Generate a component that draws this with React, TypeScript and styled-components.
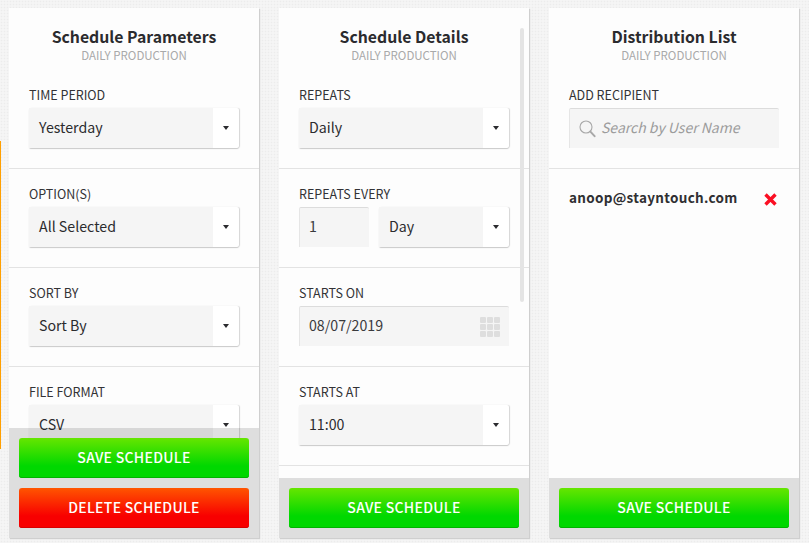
import React from "react";
import styled, { createGlobalStyle } from "styled-components";

const GlobalStyle = createGlobalStyle`
    html, body {
        margin: 0;
        padding: 0;
        height: 100%;
        overflow: hidden;
    }
    body {
        background-color: #f3f3f3;
        background-image:
            radial-gradient(#ececec 1px, transparent 1px),
            radial-gradient(#f9f9f9 1px, transparent 1px);
        background-size: 3px 3px;
        background-position: 0 0, 1.5px 1.5px;
        font-family: "Noto Sans CJK SC", "Open Sans", sans-serif;
        color: #2b2b2e;
    }
`;

const Page = styled.main`
    position: relative;
    display: flex;
    gap: 20px;
    height: 543px;
    padding: 8px 0 5px 9px;
    box-sizing: border-box;
`;

// Orange edge of the panel hidden behind the columns
const EdgeBar = styled.div`
    position: absolute;
    left: 0;
    top: 141px;
    width: 1px;
    height: 308px;
    background: #ff9f00;
`;

const Card = styled.section`
    position: relative;
    display: flex;
    flex-direction: column;
    width: 250px;
    background: #fdfdfd;
    box-shadow: 1px 1px 1px #cfcfcf;
    overflow: hidden;
`;

const ScrollArea = styled.div`
    flex: 1;
    min-height: 0;
    overflow: hidden;
`;

const ScrollThumb = styled.div`
    position: absolute;
    top: 20px;
    right: 5px;
    width: 4px;
    height: 274px;
    border-radius: 2px;
    background: #e4e4e4;
`;

const Header = styled.header`
    height: 78px;
    padding-top: 18px;
    box-sizing: border-box;
    text-align: center;
`;

const Title = styled.h2`
    margin: 0;
    font-size: 15.8px;
    line-height: 21px;
    font-weight: 600;
    color: #2b2b2e;
`;

const Subtitle = styled.div`
    font-size: 11.5px;
    line-height: 17px;
    color: #a9a9a9;
`;

const Section = styled.div<{ $first?: boolean; $last?: boolean }>`
    padding: ${({ $first }) => ($first ? "0 20px 20px" : "16px 20px 20px")};
    border-bottom: 1px solid ${({ $last }) => ($last ? "transparent" : "#e3e3e3")};
`;

const Label = styled.div`
    height: 18px;
    margin-bottom: 4px;
    font-size: 12.5px;
    line-height: 18px;
    color: #333336;
`;

const Row = styled.div`
    display: flex;
    gap: 10px;
`;

const SelectBox = styled.div`
    display: flex;
    flex: 1;
    height: 40px;
    border-radius: 2px;
    background: #fff;
    box-shadow: 0 1px 1px #c9c9c9, 1px 0 1px #d8d8d8;
`;

const SelectValue = styled.div`
    flex: 1;
    padding-left: 10px;
    background: #f5f5f5;
    font-size: 14.2px;
    line-height: 38px;
    color: #2b2b2e;
`;

const Caret = styled.div`
    display: flex;
    align-items: center;
    justify-content: center;
    width: 26px;

    &::after {
        content: "";
        border-left: 3px solid transparent;
        border-right: 3px solid transparent;
        border-top: 4px solid #2b2b2e;
    }
`;

const TextBox = styled.div<{ $width?: number }>`
    display: flex;
    align-items: center;
    flex: ${({ $width }) => ($width ? `0 0 ${$width}px` : "1")};
    height: 40px;
    padding: 0 9px;
    box-sizing: border-box;
    border-top: 1px solid #dcdcdc;
    border-left: 1px solid #e6e6e6;
    border-radius: 2px 2px 0 0;
    background: #f5f5f5;
    font-size: 14.2px;
    color: #3a3a3d;
`;

const TextValue = styled.span`
    flex: 1;
    margin-bottom: 3px;
    line-height: 36px;
`;

const Placeholder = styled.span`
    margin: 0 0 3px 5px;
    font-size: 14px;
    font-style: italic;
    line-height: 35px;
    color: #9c9c9c;
`;

const CalendarGrid = styled.div`
    display: grid;
    grid-template-columns: repeat(3, 6px);
    grid-auto-rows: 6px;
    gap: 1px;
`;

const CalendarCell = styled.span`
    background: #dedede;
    border-radius: 1px;
`;

const Recipient = styled.div`
    display: flex;
    align-items: flex-start;
    justify-content: space-between;
    padding: 18px 22px 0 20px;
    font-size: 13.5px;
    line-height: 20px;
    font-weight: 600;
    letter-spacing: 0.3px;
    color: #2f2f32;

    svg {
        margin-top: 6px;
    }
`;

const Footer = styled.footer`
    position: absolute;
    left: 0;
    right: 0;
    bottom: 0;
    display: flex;
    flex-direction: column;
    gap: 10px;
    padding: 10px;
    background: rgba(0, 0, 0, 0.12);
`;

const Button = styled.button<{ $variant: "save" | "delete" }>`
    height: 40px;
    padding: 0 0 3px;
    border: 0;
    border-radius: 3px;
    font-family: inherit;
    font-size: 14px;
    font-weight: 500;
    letter-spacing: 0.3px;
    color: #fff;
    background: ${({ $variant }) =>
        $variant === "save"
            ? "linear-gradient(to bottom, #66e600 0%, #00d800 70%, #00d800 100%)"
            : "linear-gradient(to bottom, #ff5500 0%, #f80000 70%, #f80000 100%)"};
    box-shadow: inset 0 -1px 0 ${({ $variant }) => ($variant === "save" ? "#00b400" : "#d80000")};
`;

const Select: React.FC<{ value: string }> = ({ value }) => (
    <SelectBox>
        <SelectValue>{value}</SelectValue>
        <Caret />
    </SelectBox>
);

const SearchIcon = () => (
    <svg width="17" height="18" viewBox="0 0 17 18" fill="none" stroke="#a8a8a8" aria-hidden="true">
        <circle cx="7" cy="7" r="6" strokeWidth="1.1" />
        <path d="M11.4 11.6l4.2 4.6" strokeWidth="2" strokeLinecap="round" />
    </svg>
);

const RemoveIcon = () => (
    <svg width="13" height="13" viewBox="0 0 13 13" stroke="#fb0f23" strokeWidth="3.4" aria-hidden="true">
        <path d="M1.5 1.5l10 10M11.5 1.5l-10 10" />
    </svg>
);

const CardHeader: React.FC<{ title: string }> = ({ title }) => (
    <Header>
        <Title>{title}</Title>
        <Subtitle>DAILY PRODUCTION</Subtitle>
    </Header>
);

const App: React.FC = () => (
    <Page>
        <GlobalStyle />
        <EdgeBar />

        <Card>
            <ScrollArea>
                <CardHeader title="Schedule Parameters" />
                <Section $first>
                    <Label>TIME PERIOD</Label>
                    <Select value="Yesterday" />
                </Section>
                <Section>
                    <Label>OPTION(S)</Label>
                    <Select value="All Selected" />
                </Section>
                <Section>
                    <Label>SORT BY</Label>
                    <Select value="Sort By" />
                </Section>
                <Section $last>
                    <Label>FILE FORMAT</Label>
                    <Select value="CSV" />
                </Section>
            </ScrollArea>
            <Footer>
                <Button $variant="save">SAVE SCHEDULE</Button>
                <Button $variant="delete">DELETE SCHEDULE</Button>
            </Footer>
        </Card>

        <Card>
            <ScrollThumb />
            <ScrollArea>
                <CardHeader title="Schedule Details" />
                <Section $first>
                    <Label>REPEATS</Label>
                    <Select value="Daily" />
                </Section>
                <Section>
                    <Label>REPEATS EVERY</Label>
                    <Row>
                        <TextBox $width={70}>
                            <TextValue>1</TextValue>
                        </TextBox>
                        <Select value="Day" />
                    </Row>
                </Section>
                <Section>
                    <Label>STARTS ON</Label>
                    <TextBox>
                        <TextValue>08/07/2019</TextValue>
                        <CalendarGrid>
                            {Array.from({ length: 9 }, (_, i) => (
                                <CalendarCell key={i} />
                            ))}
                        </CalendarGrid>
                    </TextBox>
                </Section>
                <Section>
                    <Label>STARTS AT</Label>
                    <Select value="11:00" />
                </Section>
            </ScrollArea>
            <Footer>
                <Button $variant="save">SAVE SCHEDULE</Button>
            </Footer>
        </Card>

        <Card>
            <ScrollArea>
                <CardHeader title="Distribution List" />
                <Section $first>
                    <Label>ADD RECIPIENT</Label>
                    <TextBox>
                        <SearchIcon />
                        <Placeholder>Search by User Name</Placeholder>
                    </TextBox>
                </Section>
                <Recipient>
                    <span>anoop@stayntouch.com</span>
                    <RemoveIcon />
                </Recipient>
            </ScrollArea>
            <Footer>
                <Button $variant="save">SAVE SCHEDULE</Button>
            </Footer>
        </Card>
    </Page>
);

export default App;
